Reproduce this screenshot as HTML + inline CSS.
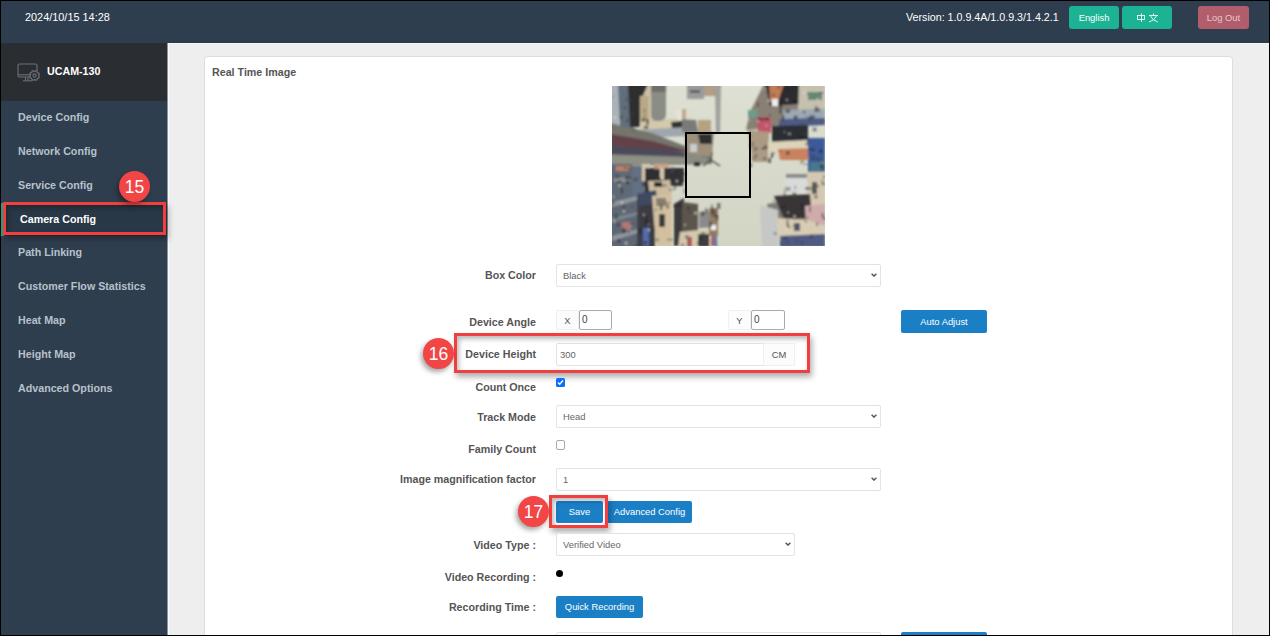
<!DOCTYPE html>
<html><head><meta charset="utf-8">
<style>
*{box-sizing:border-box;margin:0;padding:0}
html,body{width:1270px;height:636px;overflow:hidden;background:#eeeeee;font-family:"Liberation Sans",sans-serif}
.a{position:absolute}
#frame{position:absolute;left:0;top:0;width:1270px;height:636px;border:1px solid #000;z-index:100;pointer-events:none}
#hdr{left:0;top:0;width:1270px;height:43px;background:#2f3e4e}
.ht{color:#fff;font-size:10.7px;line-height:12px;white-space:nowrap}
.btn{border-radius:3px;color:#fff;font-size:9.4px;text-align:center;white-space:nowrap}
#side{left:0;top:43px;width:167px;height:593px;background:#2f3e4e}
#sidetop{left:0;top:43px;width:167px;height:58px;background:#2a2e33}
.nav{left:18px;color:#b8c1cb;font-size:10.7px;line-height:12px;font-weight:bold;white-space:nowrap}
#panel{left:204px;top:56px;width:1029px;height:600px;background:#fff;border:1px solid #dddddd;border-radius:4px}
.lbl{color:#555;font-size:10.7px;line-height:12px;font-weight:bold;white-space:nowrap;text-align:right;width:300px}
.sel{background:#fff;border:1px solid #e3e3e3;border-radius:2px}
.st{color:#666;font-size:9.4px;line-height:11px;white-space:nowrap}
.bb{background:#1b7fc6;border-radius:2px;color:#fff;font-size:9.4px;text-align:center;white-space:nowrap}
.badge{width:31px;height:31px;border-radius:50%;background:#f24545;color:#fff;font-size:17.5px;text-align:center;padding-top:1px;box-shadow:-2px 3px 5px rgba(0,0,0,0.35)}
.rbox{border:3px solid #f13e3e;box-shadow:2px 4px 6px rgba(0,0,0,0.32), inset 2px 3px 5px rgba(0,0,0,0.28)}
.arr{position:absolute;width:6px;height:4px}
.addon{background:#fcfcfc;border:1px solid #f0f0f0;color:#555;font-size:9.4px;text-align:center}
.inp{background:#fff;border:1px solid #aaaaaa;border-radius:2px;color:#444;font-size:10px}
</style></head><body>
<div id="hdr" class="a"></div>
<div class="a ht" style="left:25px;top:11px;font-size:10.9px">2024/10/15 14:28</div>
<div class="a ht" style="left:906px;top:11px">Version: 1.0.9.4A/1.0.9.3/1.4.2.1</div>
<div class="a btn" style="left:1069px;top:6px;width:50px;height:23px;background:#1bb394;line-height:23px">English</div>
<div class="a btn" style="left:1122px;top:6px;width:50px;height:23px;background:#1bb394"></div>
<svg class="a" style="left:1122px;top:6px" width="50" height="23" viewBox="0 0 50 23">
 <g stroke="#fff" stroke-width="0.85" fill="none">
  <rect x="15.5" y="9.5" width="7" height="4"/>
  <line x1="19.5" y1="7.5" x2="19.5" y2="16"/>
  <line x1="31.5" y1="7.5" x2="31.5" y2="9"/>
  <line x1="27" y1="9.5" x2="36" y2="9.5"/>
  <path d="M28.5 10 Q30.5 14.5 35.8 16"/>
  <path d="M34.5 10 Q32.5 14.5 27 16"/>
 </g>
</svg>
<div class="a btn" style="left:1198px;top:6px;width:51px;height:23px;background:#b15d6b;line-height:23px;color:#e6c9cd">Log Out</div>

<div id="side" class="a"></div>
<div id="sidetop" class="a"></div>
<div class="a" style="left:167px;top:43px;width:1px;height:593px;background:#8e9399"></div>
<div class="a" style="left:168px;top:43px;width:1px;height:593px;background:#fafafa"></div>
<div class="a" style="left:169px;top:41px;width:1101px;height:2px;background:#2c3b4b"></div>
<div class="a" style="left:169px;top:43px;width:1101px;height:1px;background:#f6f6f6"></div>
<svg class="a" style="left:16px;top:62px" width="26" height="22" viewBox="0 0 26 22">
 <g stroke="#6c7075" stroke-width="1.1" fill="none">
  <path d="M14 15 H3.5 Q2 15 2 13.5 V3.5 Q2 2 3.5 2 H19.5 Q21 2 21 3.5 V9"/>
  <line x1="2" y1="12.8" x2="15" y2="12.8"/>
  <path d="M9.5 15.5 V18.5 M12 15.5 V18.5"/>
  <line x1="7" y1="18.8" x2="16" y2="18.8"/>
  <path d="M22.58 13.94 L23.36 14.68 L22.77 16.10 L21.69 16.07 L21.07 16.69 L21.10 17.77 L19.68 18.36 L18.94 17.58 L18.06 17.58 L17.32 18.36 L15.90 17.77 L15.93 16.69 L15.31 16.07 L14.23 16.10 L13.64 14.68 L14.42 13.94 L14.42 13.06 L13.64 12.32 L14.23 10.90 L15.31 10.93 L15.93 10.31 L15.90 9.23 L17.32 8.64 L18.06 9.42 L18.94 9.42 L19.68 8.64 L21.10 9.23 L21.07 10.31 L21.69 10.93 L22.77 10.90 L23.36 12.32 L22.58 13.06Z"/>
  <circle cx="18.5" cy="13.5" r="1.6"/>
 </g>
</svg>
<div class="a ht" style="left:47px;top:65px;font-weight:bold">UCAM-130</div>
<div class="a nav" style="top:111px">Device Config</div>
<div class="a nav" style="top:145px">Network Config</div>
<div class="a nav" style="top:179px">Service Config</div>
<div class="a" style="left:1px;top:203px;width:166px;height:33px;background:#293846;border-left:3px solid #19aa8d"></div>
<div class="a nav" style="left:20px;top:213px;color:#fff">Camera Config</div>
<div class="a nav" style="top:246px">Path Linking</div>
<div class="a nav" style="top:280px">Customer Flow Statistics</div>
<div class="a nav" style="top:314px">Heat Map</div>
<div class="a nav" style="top:348px">Height Map</div>
<div class="a nav" style="top:382px">Advanced Options</div>

<div class="a rbox" style="left:3px;top:202px;width:163px;height:33px"></div>
<div class="a badge" style="left:119px;top:171px;line-height:31px">15</div>

<div id="panel" class="a"></div>
<div class="a lbl" style="left:212px;top:66px;text-align:left">Real Time Image</div>

<!-- camera image -->
<svg class="a" style="left:612px;top:86px" width="213" height="160" viewBox="0 0 213 160">
 <defs><filter id="bl" x="-5%" y="-5%" width="110%" height="110%"><feGaussianBlur stdDeviation="1"/><feColorMatrix type="saturate" values="0.72"/></filter>
 <clipPath id="cc"><rect width="213" height="160"/></clipPath></defs>
 <defs><linearGradient id="fl" x1="0" y1="0" x2="0" y2="1"><stop offset="0" stop-color="#dde0d2"/><stop offset="1" stop-color="#d2d5c4"/></linearGradient></defs><rect width="213" height="160" fill="url(#fl)"/>
 <g filter="url(#bl)" clip-path="url(#cc)">
 <!-- TL -->
 <rect x="-2" y="-2" width="9" height="42" fill="#a8b4bc"/>
 <polygon points="6,-2 20,-2 22,44 8,44" fill="#5c6e80"/>
 <polygon points="16,-2 36,-2 36,11 30,12 30,41 18,41" fill="#2e2e2e"/>
 <polygon points="28,12 44,12 46,33 66,33 66,44 28,44" fill="#d8c8a0"/>
 <polygon points="36,-2 40,-2 44,12 30,12" fill="#d0c098"/>
 <rect x="28" y="10" width="9" height="26" fill="#c0a878"/>
 <path d="M39,-2 H54 V28 Q54,35 47,35 H44 Q39,35 39,28 Z" fill="#8a8c84"/>
 <rect x="39" y="-2" width="15" height="8" fill="#6e7068"/>
 <rect x="64" y="24" width="8" height="9" fill="#e6e2d0"/>
 <polygon points="59,36 72,35 72,42 60,42" fill="#303030"/>
 <polygon points="24,44 75,41 76,50 26,52" fill="#9aa8b0"/>
 <!-- TC -->
 <rect x="75" y="-2" width="17" height="15" fill="#9a9c9a"/>
 <rect x="78" y="4" width="10" height="3" fill="#606060"/>
 <rect x="92" y="-2" width="13" height="12" fill="#b89c78"/>
 <path d="M103,-2 H109 L108,47 H104 Z" fill="#a0a09c"/>
 <rect x="70" y="23" width="6" height="10" fill="#c0a880"/>
 <rect x="74" y="23" width="7" height="10" fill="#e0dcc8"/>
 <polygon points="70,33 84,34 86,46 70,46" fill="#7a7a78"/>
 <rect x="86" y="34" width="13" height="12" fill="#bca070"/>
 <!-- pole wedge -->
 <polygon points="-2,37 40,47 73,60 100,71 100,78 -2,80" fill="#74766a"/>
 <polygon points="-2,48 40,55 80,66 -2,60" fill="#6a3e4a"/>
 <polygon points="-2,60 60,64 92,71 -2,68" fill="#4a4860"/>
 <polygon points="-2,69 90,72 100,77 -2,79" fill="#8e9082"/>
 <!-- under pole -->
 <rect x="-2" y="78" width="22" height="34" fill="#5a6a7c"/>
 <rect x="4" y="80" width="14" height="5" fill="#c87a50"/>
 <rect x="2" y="92" width="16" height="4" fill="#8a929a"/>
 <rect x="20" y="80" width="13" height="30" fill="#5e7088"/>
 <rect x="30" y="78" width="8" height="17" fill="#d8c8a0"/>
 <rect x="33" y="82" width="16" height="28" fill="#2e2e36"/>
 <rect x="42" y="78" width="15" height="5" fill="#d8a078"/>
 <rect x="48" y="82" width="4" height="10" fill="#d8c8a0"/>
 <rect x="52" y="82" width="20" height="18" fill="#333338"/>
 <polygon points="36,95 58,94 60,110 38,110" fill="#d0bc90"/>
 <rect x="42" y="96" width="8" height="5" fill="#2a2a2c"/>
 <!-- BL -->
 <rect x="-2" y="110" width="29" height="52" fill="#5a6878"/>
 <polygon points="0,116 26,110 26,114 0,121" fill="#8e96a0"/>
 <rect x="10" y="136" width="9" height="8" fill="#c07070"/>
 <polygon points="0,150 26,143 26,147 0,155" fill="#8e96a0"/>
 <polygon points="0,132 26,126 26,129 0,136" fill="#7a8490"/>
 <rect x="25" y="108" width="18" height="54" fill="#3c4049"/>
 <polygon points="25,108 44,104 46,122 28,126" fill="#3a4a68"/>
 <polygon points="28,120 40,118 42,160 30,160" fill="#3a3a42"/>
 <rect x="31" y="142" width="6" height="18" fill="#4a6ac0"/>
 <polygon points="40,110 60,108 60,160 44,160" fill="#d8c090"/>
 <rect x="47" y="128" width="6" height="13" fill="#3a3a3a"/>
 <rect x="44" y="112" width="10" height="8" fill="#8a7e6a"/>
 <polygon points="62,118 72,112 72,160 62,160" fill="#3a3a3e"/>
 <!-- BC -->
 <polygon points="70,116 86,118 86,150 70,148" fill="#5e5448"/>
 <rect x="87" y="126" width="10" height="16" fill="#8a8a8a"/>
 <rect x="97" y="122" width="9" height="28" fill="#9a7a5c"/>
 <rect x="99" y="139" width="5" height="5" fill="#f4f4f0"/>
 <polygon points="68,146 97,143 97,162 66,162" fill="#d8c8a0"/>
 <rect x="75" y="151" width="5" height="10" fill="#c04848"/>
 <rect x="86" y="148" width="11" height="13" fill="#3c3c3c"/>
 <rect x="99" y="150" width="3" height="10" fill="#c05050"/>
 <rect x="102" y="150" width="3" height="10" fill="#4a80b0"/>
 
 <!-- inside box -->
 <polygon points="73,46 102,46 100,70 74,70" fill="#a09070"/>
 <polygon points="86,48 100,48 100,58 88,58" fill="#2e2e2e"/>
 <rect x="78" y="58" width="7" height="8" fill="#c8ccd0"/>
 <polygon points="73,66 96,72 96,78 73,76" fill="#8a8c80"/>
 <rect x="82" y="76" width="6" height="4" fill="#2a2a2a"/>
 <g stroke="#3a3a38" stroke-width="1.1"><line x1="99" y1="74" x2="91" y2="80"/><line x1="99" y1="74" x2="108" y2="80"/><line x1="99" y1="74" x2="100" y2="66"/></g>
 <!-- TR -->
 <polygon points="152,-2 213,-2 213,24 158,42 134,44 138,26" fill="#8a8070"/>
 <polygon points="153,-2 190,-2 188,18 158,20" fill="#2a2a30"/>
 <polygon points="157,-2 172,-2 166,16 158,16" fill="#d07432"/>
 <rect x="160" y="13" width="6" height="7" fill="#f0f0f0"/>
 <polygon points="187,-2 213,-2 213,24 186,24" fill="#c8c0a8"/>
 <rect x="196" y="6" width="14" height="8" fill="#5a8a70"/>
 <rect x="136" y="24" width="9" height="7" fill="#55a08e"/>
 <polygon points="171,24 213,23 213,33 172,34" fill="#98a8b8"/>
 <polygon points="168,33 213,32 213,39 166,41" fill="#4a5a90"/>
 <polygon points="145,31 159,31 159,47 146,47" fill="#d84060"/>
 <polygon points="136,44 157,46 156,76 140,76" fill="#b09a78"/>
 <polygon points="160,40 196,39 196,57 160,58" fill="#2a2e34"/>
 <polygon points="156,56 195,54 195,68 156,68" fill="#e0d4b0"/>
 <polygon points="166,63 202,62 200,74 168,74" fill="#d87a38"/>
 <rect x="196" y="52" width="17" height="34" fill="#2a5aa8"/>
 <rect x="198" y="76" width="15" height="10" fill="#2a7a9a"/>
 <!-- BR -->
 <rect x="194" y="86" width="19" height="36" fill="#d8c8a8"/>
 <rect x="200" y="96" width="5" height="12" fill="#5a5a5a"/>
 <polygon points="174,90 195,90 195,107 174,107" fill="#d8dcd8"/>
 <rect x="174" y="88" width="21" height="4" fill="#8a8c88"/>
 <polygon points="155,118 196,112 200,135 157,135" fill="#7a7c70"/>
 <polygon points="162,110 198,108 200,132 172,133" fill="#3a3438"/>
 <polygon points="148,119 166,124 166,161 150,161" fill="#c4c8c6"/>
 <polygon points="193,120 213,118 213,142 194,140" fill="#d8a8a8"/>
 <polygon points="165,132 196,134 213,140 213,152 166,155" fill="#dccca8"/>
 <rect x="182" y="137" width="6" height="8" fill="#505870"/>
 <polygon points="168,150 213,148 213,161 168,161" fill="#4a5a90"/>
 <!-- texture -->
 <rect x="12.4" y="81.2" width="2.3" height="1.7" fill="#202226" opacity="0.54"/>
 <rect x="12.6" y="90.5" width="5.8" height="2.9" fill="#202226" opacity="0.55"/>
 <rect x="84.5" y="156.2" width="3.6" height="1.7" fill="#2a2c30" opacity="0.54"/>
 <rect x="145.3" y="16.5" width="1.6" height="4.1" fill="#202226" opacity="0.55"/>
 <rect x="99.2" y="147.8" width="1.7" height="3.1" fill="#2a2c30" opacity="0.38"/>
 <rect x="72.9" y="149.3" width="3.9" height="3.4" fill="#4a4a50" opacity="0.55"/>
 <rect x="186.5" y="50.2" width="4.6" height="2.8" fill="#1c1e22" opacity="0.37"/>
 <rect x="19.9" y="43.2" width="4.6" height="1.2" fill="#3a3a3e" opacity="0.58"/>
 <rect x="211.5" y="131.5" width="2.8" height="2.2" fill="#202226" opacity="0.68"/>
 <rect x="61.2" y="118.1" width="3.8" height="3.3" fill="#2a2c30" opacity="0.51"/>
 <rect x="174.5" y="138.2" width="2.2" height="2.8" fill="#1c1e22" opacity="0.69"/>
 <rect x="32.1" y="28.2" width="1.7" height="2.5" fill="#4a4a50" opacity="0.41"/>
 <rect x="183.0" y="152.0" width="3.2" height="4.4" fill="#4a4a50" opacity="0.49"/>
 <rect x="14.3" y="33.4" width="2.0" height="2.2" fill="#202226" opacity="0.55"/>
 <rect x="208.3" y="76.9" width="2.9" height="1.4" fill="#3a3a3e" opacity="0.52"/>
 <rect x="43.7" y="152.3" width="3.1" height="3.1" fill="#4a4a50" opacity="0.45"/>
 <rect x="193.5" y="56.9" width="2.5" height="2.6" fill="#2a2c30" opacity="0.56"/>
 <rect x="167.9" y="121.3" width="1.7" height="2.4" fill="#2a2c30" opacity="0.42"/>
 <rect x="105.0" y="117.0" width="3.4" height="6.0" fill="#2a2c30" opacity="0.59"/>
 <rect x="203.7" y="71.6" width="5.7" height="4.0" fill="#3a3a3e" opacity="0.38"/>
 <rect x="209.9" y="97.6" width="3.7" height="1.5" fill="#202226" opacity="0.64"/>
 <rect x="151.5" y="31.9" width="5.5" height="2.3" fill="#202226" opacity="0.63"/>
 <rect x="207.0" y="63.3" width="3.3" height="3.8" fill="#2a2c30" opacity="0.70"/>
 <rect x="5.9" y="94.5" width="3.6" height="3.0" fill="#4a4a50" opacity="0.69"/>
 <rect x="140.0" y="56.1" width="1.4" height="4.0" fill="#202226" opacity="0.53"/>
 <rect x="198.9" y="69.4" width="3.5" height="5.4" fill="#3a3a3e" opacity="0.42"/>
 <rect x="69.4" y="87.1" width="5.3" height="1.2" fill="#1c1e22" opacity="0.58"/>
 <rect x="176.2" y="140.5" width="2.1" height="1.5" fill="#1c1e22" opacity="0.62"/>
 <rect x="31.9" y="22.6" width="1.4" height="4.3" fill="#4a4a50" opacity="0.54"/>
 <rect x="102.8" y="124.2" width="1.2" height="5.5" fill="#202226" opacity="0.62"/>
 <rect x="161.9" y="146.0" width="3.5" height="2.8" fill="#4a4a50" opacity="0.42"/>
 <rect x="59.0" y="81.3" width="2.5" height="5.1" fill="#4a4a50" opacity="0.66"/>
 <rect x="200.7" y="41.5" width="4.0" height="3.8" fill="#2a2c30" opacity="0.50"/>
 <rect x="143.0" y="68.5" width="1.9" height="2.5" fill="#2a2c30" opacity="0.68"/>
 <rect x="137.1" y="58.6" width="1.4" height="2.6" fill="#202226" opacity="0.49"/>
 <rect x="103.8" y="158.4" width="1.5" height="5.2" fill="#4a4a50" opacity="0.49"/>
 <rect x="149.8" y="61.5" width="3.8" height="1.9" fill="#202226" opacity="0.69"/>
 <rect x="167.9" y="155.5" width="1.8" height="2.0" fill="#2a2c30" opacity="0.44"/>
 <rect x="194.1" y="131.0" width="2.7" height="1.4" fill="#4a4a50" opacity="0.52"/>
 <rect x="170.3" y="29.3" width="1.8" height="5.5" fill="#202226" opacity="0.63"/>
 <rect x="17.8" y="137.0" width="3.6" height="1.8" fill="#3a3a3e" opacity="0.70"/>
 <rect x="89.0" y="146.5" width="4.3" height="1.1" fill="#202226" opacity="0.69"/>
 <rect x="198.6" y="100.6" width="1.6" height="3.9" fill="#2a2c30" opacity="0.44"/>
 <rect x="171.2" y="159.1" width="1.7" height="1.1" fill="#2a2c30" opacity="0.53"/>
 <rect x="189.3" y="155.2" width="1.6" height="2.9" fill="#2a2c30" opacity="0.64"/>
 <rect x="11.6" y="20.8" width="3.2" height="1.8" fill="#2a2c30" opacity="0.37"/>
 <rect x="141.7" y="60.9" width="3.8" height="3.9" fill="#3a3a3e" opacity="0.37"/>
 <rect x="70.1" y="157.6" width="3.0" height="1.1" fill="#2a2c30" opacity="0.47"/>
 <rect x="42.8" y="80.8" width="1.8" height="1.5" fill="#1c1e22" opacity="0.56"/>
 <rect x="204.0" y="136.5" width="2.2" height="3.7" fill="#4a4a50" opacity="0.49"/>
 <rect x="69.5" y="157.6" width="2.2" height="3.2" fill="#202226" opacity="0.64"/>
 <rect x="173.1" y="2.6" width="4.6" height="3.4" fill="#2a2c30" opacity="0.38"/>
 <rect x="8.9" y="101.9" width="2.1" height="5.8" fill="#202226" opacity="0.57"/>
 <rect x="169.9" y="119.7" width="3.8" height="2.6" fill="#202226" opacity="0.61"/>
 <rect x="100.9" y="129.5" width="5.3" height="1.7" fill="#2a2c30" opacity="0.61"/>
 <rect x="207.8" y="79.0" width="3.2" height="2.4" fill="#202226" opacity="0.57"/>
 <rect x="31.4" y="40.6" width="4.8" height="1.9" fill="#202226" opacity="0.52"/>
 <rect x="103.5" y="155.6" width="1.7" height="1.9" fill="#4a4a50" opacity="0.45"/>
 <rect x="99.2" y="122.7" width="2.6" height="6.0" fill="#202226" opacity="0.68"/>
 <rect x="174.6" y="154.9" width="1.8" height="3.5" fill="#2a2c30" opacity="0.38"/>
 <rect x="19.2" y="119.6" width="2.7" height="2.1" fill="#4a4a50" opacity="0.45"/>
 <rect x="202.3" y="109.1" width="3.2" height="3.3" fill="#1c1e22" opacity="0.46"/>
 <rect x="179.0" y="0.3" width="3.5" height="4.9" fill="#2a2c30" opacity="0.60"/>
 <rect x="192.0" y="46.4" width="3.2" height="2.2" fill="#4a4a50" opacity="0.38"/>
 <rect x="197.1" y="120.9" width="1.8" height="5.3" fill="#3a3a3e" opacity="0.57"/>
 <rect x="31.7" y="155.4" width="3.5" height="1.9" fill="#1c1e22" opacity="0.66"/>
 <rect x="172.9" y="100.9" width="5.6" height="3.8" fill="#202226" opacity="0.37"/>
 <rect x="156.0" y="72.1" width="2.9" height="4.9" fill="#202226" opacity="0.67"/>
 <rect x="54.5" y="118.2" width="2.2" height="4.4" fill="#1c1e22" opacity="0.55"/>
 <rect x="34.4" y="33.3" width="2.5" height="5.6" fill="#3a3a3e" opacity="0.70"/>
 <rect x="159.7" y="66.0" width="2.6" height="3.4" fill="#3a3a3e" opacity="0.61"/>
 <rect x="180.8" y="14.8" width="5.5" height="2.2" fill="#1c1e22" opacity="0.68"/>
 <rect x="180.8" y="139.7" width="1.6" height="1.1" fill="#1c1e22" opacity="0.69"/>
 <rect x="198.1" y="148.5" width="2.4" height="3.9" fill="#202226" opacity="0.43"/>
 <rect x="32.4" y="155.5" width="2.0" height="3.5" fill="#1c1e22" opacity="0.38"/>
 <rect x="165.5" y="0.2" width="2.7" height="2.1" fill="#3a3a3e" opacity="0.69"/>
 <rect x="93.2" y="122.2" width="1.9" height="1.9" fill="#2a2c30" opacity="0.49"/>
 <rect x="47.6" y="96.2" width="1.9" height="1.5" fill="#3a3a3e" opacity="0.58"/>
 <rect x="188.2" y="76.0" width="2.6" height="1.7" fill="#3a3a3e" opacity="0.37"/>
 <rect x="41.3" y="141.6" width="1.2" height="4.4" fill="#1c1e22" opacity="0.67"/>
 <rect x="145.4" y="31.7" width="5.1" height="3.2" fill="#2a2c30" opacity="0.52"/>
 <rect x="42.7" y="122.5" width="2.4" height="2.4" fill="#3a3a3e" opacity="0.39"/>
 <rect x="190.9" y="77.6" width="5.6" height="1.2" fill="#1c1e22" opacity="0.37"/>
 <rect x="5.0" y="95.4" width="3.1" height="3.4" fill="#1c1e22" opacity="0.66"/>
 <rect x="188.2" y="117.2" width="3.8" height="6.0" fill="#2a2c30" opacity="0.58"/>
 <rect x="66.4" y="116.1" width="4.0" height="5.3" fill="#202226" opacity="0.35"/>
 <rect x="203.5" y="19.8" width="1.6" height="5.8" fill="#3a3a3e" opacity="0.64"/>
 <rect x="195.9" y="30.9" width="3.7" height="3.1" fill="#1c1e22" opacity="0.44"/>
 <rect x="171.1" y="9.9" width="2.4" height="1.2" fill="#3a3a3e" opacity="0.45"/>
 <rect x="204.0" y="98.7" width="3.1" height="2.7" fill="#3a3a3e" opacity="0.45"/>
 <rect x="171.6" y="151.4" width="3.5" height="1.8" fill="#1c1e22" opacity="0.68"/>
 <rect x="197.7" y="29.3" width="5.1" height="3.2" fill="#2a2c30" opacity="0.56"/>
 <rect x="77.1" y="125.2" width="1.9" height="1.6" fill="#2a2c30" opacity="0.49"/>
 <rect x="138.4" y="77.1" width="1.5" height="4.0" fill="#202226" opacity="0.70"/>
 <rect x="151.2" y="71.5" width="2.6" height="2.3" fill="#2a2c30" opacity="0.61"/>
 <rect x="180.4" y="106.3" width="3.5" height="2.0" fill="#4a4a50" opacity="0.44"/>
 <rect x="193.3" y="30.1" width="1.8" height="1.8" fill="#4a4a50" opacity="0.43"/>
 <rect x="172.2" y="104.5" width="1.3" height="6.0" fill="#2a2c30" opacity="0.64"/>
 <rect x="194.8" y="6.5" width="1.4" height="2.8" fill="#4a4a50" opacity="0.42"/>
 <rect x="16.0" y="82.0" width="2.3" height="2.8" fill="#202226" opacity="0.39"/>
 <rect x="30.1" y="32.6" width="2.6" height="2.8" fill="#2a2c30" opacity="0.64"/>
 <rect x="174.4" y="65.4" width="2.9" height="3.2" fill="#202226" opacity="0.63"/>
 <rect x="19.4" y="26.2" width="2.2" height="4.6" fill="#3a3a3e" opacity="0.50"/>
 <rect x="10.9" y="119.3" width="2.2" height="5.5" fill="#3a3a3e" opacity="0.58"/>
 <rect x="200.6" y="69.5" width="1.3" height="2.2" fill="#4a4a50" opacity="0.66"/>
 <rect x="3.2" y="88.2" width="3.7" height="4.4" fill="#4a4a50" opacity="0.67"/>
 <rect x="157.0" y="27.5" width="1.5" height="3.1" fill="#202226" opacity="0.39"/>
 <rect x="104.5" y="128.8" width="1.6" height="5.9" fill="#202226" opacity="0.69"/>
 <rect x="197.3" y="62.1" width="5.6" height="2.9" fill="#2a2c30" opacity="0.57"/>
 <rect x="182.5" y="99.4" width="1.6" height="4.3" fill="#4a4a50" opacity="0.43"/>
 <rect x="52.6" y="116.0" width="5.5" height="1.1" fill="#202226" opacity="0.58"/>
 <rect x="97.1" y="135.8" width="2.9" height="5.0" fill="#2a2c30" opacity="0.50"/>
 <rect x="140.3" y="71.5" width="3.5" height="1.1" fill="#1c1e22" opacity="0.51"/>
 <rect x="174.4" y="133.8" width="2.2" height="5.1" fill="#3a3a3e" opacity="0.50"/>
 <rect x="202.5" y="21.8" width="5.4" height="4.0" fill="#202226" opacity="0.42"/>
 <rect x="209.1" y="78.7" width="3.7" height="5.8" fill="#2a2c30" opacity="0.37"/>
 <rect x="74.7" y="121.0" width="3.7" height="2.2" fill="#1c1e22" opacity="0.40"/>
 <rect x="7.8" y="29.1" width="2.2" height="3.8" fill="#1c1e22" opacity="0.41"/>
 <rect x="167.2" y="18.4" width="2.9" height="3.9" fill="#1c1e22" opacity="0.54"/>
 <rect x="22.3" y="158.9" width="4.3" height="2.2" fill="#3a3a3e" opacity="0.48"/>
 <rect x="49.0" y="98.5" width="5.8" height="1.9" fill="#3a3a3e" opacity="0.57"/>
 <rect x="209.6" y="93.7" width="1.9" height="4.5" fill="#202226" opacity="0.43"/>
 <rect x="62.0" y="100.1" width="2.1" height="3.4" fill="#1c1e22" opacity="0.43"/>
 <rect x="47.8" y="93.4" width="4.2" height="1.6" fill="#1c1e22" opacity="0.41"/>
 <rect x="3.0" y="128.2" width="2.4" height="4.7" fill="#2a2c30" opacity="0.65"/>
 <rect x="166.6" y="64.3" width="2.7" height="1.0" fill="#4a4a50" opacity="0.66"/>
 <rect x="0.1" y="9.8" width="1.6" height="1.6" fill="#202226" opacity="0.35"/>
 <rect x="30.3" y="31.9" width="4.2" height="2.5" fill="#4a4a50" opacity="0.41"/>
 <rect x="10.3" y="142.3" width="3.1" height="5.0" fill="#1c1e22" opacity="0.61"/>
 <rect x="99.1" y="118.7" width="1.7" height="3.5" fill="#2a2c30" opacity="0.58"/>
 <rect x="26.3" y="142.6" width="3.8" height="5.7" fill="#202226" opacity="0.44"/>
 <rect x="56.5" y="102.7" width="5.8" height="1.7" fill="#202226" opacity="0.41"/>
 <rect x="192.7" y="134.7" width="2.4" height="1.5" fill="#2a2c30" opacity="0.66"/>
 <rect x="193.3" y="100.9" width="4.6" height="3.0" fill="#1c1e22" opacity="0.52"/>
 <rect x="5.6" y="152.9" width="2.6" height="3.7" fill="#1c1e22" opacity="0.57"/>
 <rect x="16.6" y="145.7" width="1.1" height="2.2" fill="#2a2c30" opacity="0.47"/>
 <rect x="30.2" y="4.6" width="1.7" height="3.1" fill="#202226" opacity="0.61"/>
 <rect x="14.0" y="94.5" width="3.1" height="3.5" fill="#202226" opacity="0.66"/>
 <rect x="161.0" y="113.8" width="1.7" height="3.2" fill="#202226" opacity="0.36"/>
 <rect x="180.6" y="129.9" width="4.4" height="3.5" fill="#3a3a3e" opacity="0.52"/>
 <rect x="28.3" y="126.7" width="1.9" height="4.4" fill="#3a3a3e" opacity="0.36"/>
 <rect x="152.5" y="58.9" width="2.9" height="3.9" fill="#3a3a3e" opacity="0.57"/>
 <rect x="93.0" y="123.7" width="3.1" height="3.1" fill="#2a2c30" opacity="0.60"/>
 <rect x="159.9" y="8.6" width="3.1" height="1.3" fill="#2a2c30" opacity="0.69"/>
 <rect x="33.8" y="130.4" width="1.7" height="5.7" fill="#202226" opacity="0.52"/>
 <rect x="211.1" y="89.8" width="2.0" height="2.0" fill="#1c1e22" opacity="0.66"/>
 <rect x="158.7" y="67.5" width="2.1" height="4.4" fill="#1c1e22" opacity="0.67"/>
 <rect x="188.3" y="37.4" width="3.6" height="2.6" fill="#4a4a50" opacity="0.58"/>
 <rect x="33.1" y="134.9" width="3.2" height="4.5" fill="#1c1e22" opacity="0.59"/>
 <rect x="71.2" y="102.8" width="2.5" height="4.6" fill="#4a4a50" opacity="0.40"/>
 <rect x="33.2" y="39.6" width="2.6" height="3.0" fill="#3a3a3e" opacity="0.68"/>
 <rect x="55.1" y="152.8" width="6.0" height="1.5" fill="#2a2c30" opacity="0.48"/>
 <rect x="209.6" y="127.2" width="2.3" height="4.8" fill="#202226" opacity="0.45"/>
 <rect x="188.6" y="74.2" width="3.6" height="1.6" fill="#2a2c30" opacity="0.53"/>
 <rect x="30.2" y="96.6" width="3.3" height="3.2" fill="#1c1e22" opacity="0.60"/>
 <rect x="180.2" y="106.9" width="4.4" height="3.6" fill="#4a4a50" opacity="0.65"/>
 <rect x="89.4" y="125.2" width="2.9" height="4.7" fill="#1c1e22" opacity="0.52"/>
 <rect x="4.2" y="137.4" width="3.8" height="3.0" fill="#3a3a3e" opacity="0.62"/>
 <rect x="207.6" y="6.1" width="3.9" height="1.5" fill="#2a2c30" opacity="0.53"/>
 <rect x="21.5" y="91.9" width="3.9" height="3.2" fill="#3a3a3e" opacity="0.53"/>
 <rect x="87.4" y="151.7" width="3.1" height="2.4" fill="#202226" opacity="0.61"/>
 <rect x="13.1" y="12.0" width="5.6" height="2.9" fill="#4a4a50" opacity="0.44"/>
 <rect x="47.8" y="118.6" width="2.6" height="5.7" fill="#1c1e22" opacity="0.51"/>
 <rect x="35.0" y="148.7" width="3.4" height="1.8" fill="#4a4a50" opacity="0.60"/>
 <rect x="173.5" y="23.4" width="4.5" height="3.5" fill="#1c1e22" opacity="0.51"/>
 <rect x="62.7" y="87.7" width="3.5" height="2.1" fill="#2a2c30" opacity="0.44"/>
 <rect x="0.6" y="115.5" width="1.7" height="2.8" fill="#1c1e22" opacity="0.52"/>
 <rect x="191.1" y="24.4" width="2.2" height="2.9" fill="#4a4a50" opacity="0.67"/>
 <rect x="167.0" y="22.5" width="2.9" height="5.2" fill="#202226" opacity="0.42"/>
 <rect x="181.9" y="29.7" width="3.4" height="3.5" fill="#1c1e22" opacity="0.63"/>
 <rect x="35.8" y="142.6" width="2.2" height="2.6" fill="#e8e4d8" opacity="0.6"/>
 <rect x="167.9" y="134.2" width="1.4" height="2.4" fill="#e8e4d8" opacity="0.6"/>
 <rect x="93.4" y="141.2" width="2.1" height="1.5" fill="#e8e4d8" opacity="0.6"/>
 <rect x="1.4" y="134.5" width="1.9" height="2.1" fill="#e8e4d8" opacity="0.6"/>
 <rect x="204.6" y="12.1" width="2.3" height="2.3" fill="#e8e4d8" opacity="0.6"/>
 <rect x="6.1" y="97.5" width="2.4" height="2.9" fill="#e8e4d8" opacity="0.6"/>
 <rect x="70.4" y="157.1" width="2.0" height="2.0" fill="#e8e4d8" opacity="0.6"/>
 <rect x="191.2" y="5.4" width="2.4" height="2.3" fill="#e8e4d8" opacity="0.6"/>
 <rect x="72.1" y="137.9" width="1.7" height="1.9" fill="#e8e4d8" opacity="0.6"/>
 <rect x="176.1" y="46.9" width="2.7" height="1.8" fill="#e8e4d8" opacity="0.6"/>
 <rect x="63.7" y="93.8" width="2.3" height="2.6" fill="#e8e4d8" opacity="0.6"/>
 <rect x="8.5" y="115.6" width="2.8" height="2.1" fill="#e8e4d8" opacity="0.6"/>
 <rect x="1.3" y="30.4" width="2.8" height="2.2" fill="#e8e4d8" opacity="0.6"/>
 <rect x="193.8" y="97.9" width="2.2" height="2.3" fill="#e8e4d8" opacity="0.6"/>
 <rect x="145.0" y="34.0" width="2.3" height="1.9" fill="#e8e4d8" opacity="0.6"/>
 <rect x="162.4" y="16.2" width="1.4" height="1.1" fill="#e8e4d8" opacity="0.6"/>
 <rect x="165.0" y="146.3" width="2.3" height="1.7" fill="#e8e4d8" opacity="0.6"/>
 <rect x="175.2" y="125.8" width="2.1" height="1.5" fill="#e8e4d8" opacity="0.6"/>
 <rect x="11.6" y="90.8" width="1.1" height="1.2" fill="#e8e4d8" opacity="0.6"/>
 <rect x="195.7" y="71.4" width="1.0" height="1.8" fill="#e8e4d8" opacity="0.6"/>
 <rect x="208.9" y="76.1" width="1.8" height="1.2" fill="#e8e4d8" opacity="0.6"/>
 <rect x="137.3" y="34.0" width="1.3" height="1.0" fill="#e8e4d8" opacity="0.6"/>
 <rect x="1.0" y="109.4" width="1.2" height="2.9" fill="#e8e4d8" opacity="0.6"/>
 <rect x="18.8" y="139.1" width="1.3" height="1.0" fill="#e8e4d8" opacity="0.6"/>
 <rect x="153.2" y="38.8" width="2.5" height="1.4" fill="#e8e4d8" opacity="0.6"/>
 <rect x="10.7" y="123.8" width="2.4" height="2.7" fill="#e8e4d8" opacity="0.6"/>
 <rect x="155.4" y="13.5" width="2.3" height="2.4" fill="#e8e4d8" opacity="0.6"/>
 <rect x="98.1" y="149.2" width="1.5" height="2.9" fill="#e8e4d8" opacity="0.6"/>
 <rect x="152.8" y="1.8" width="1.0" height="2.3" fill="#e8e4d8" opacity="0.6"/>
 <rect x="174.1" y="12.7" width="1.6" height="2.5" fill="#e8e4d8" opacity="0.6"/>
 <rect x="35.4" y="137.8" width="2.0" height="1.1" fill="#e8e4d8" opacity="0.6"/>
 <rect x="30.9" y="127.6" width="1.7" height="2.3" fill="#e8e4d8" opacity="0.6"/>
 <rect x="82.2" y="125.8" width="2.9" height="2.6" fill="#e8e4d8" opacity="0.6"/>
 <rect x="12.9" y="155.8" width="2.4" height="2.7" fill="#e8e4d8" opacity="0.6"/>
 <rect x="70.7" y="96.9" width="3.0" height="2.7" fill="#e8e4d8" opacity="0.6"/>
 <rect x="91.3" y="142.1" width="1.8" height="2.4" fill="#e8e4d8" opacity="0.6"/>
 <rect x="172.0" y="45.3" width="1.0" height="1.5" fill="#e8e4d8" opacity="0.6"/>
 <rect x="173.8" y="142.0" width="1.1" height="2.7" fill="#e8e4d8" opacity="0.6"/>
 <rect x="172.9" y="138.8" width="2.1" height="1.5" fill="#e8e4d8" opacity="0.6"/>
 <rect x="181.3" y="129.1" width="2.4" height="2.8" fill="#e8e4d8" opacity="0.6"/>
 <!-- /texture -->
 </g>
</svg>


<div class="a" style="left:685px;top:132px;width:66px;height:66px;border:2px solid #000"></div>

<div class="a lbl" style="left:236px;top:269px">Box Color</div>
<div class="a sel" style="left:556px;top:264px;width:325px;height:23px"></div>
<div class="a st" style="left:563px;top:270px">Black</div>
<svg class="arr" style="left:871px;top:273px" viewBox="0 0 6 4"><path d="M0.6 0.7 L3 3.1 L5.4 0.7" stroke="#555" stroke-width="1.4" fill="none"/></svg>

<div class="a lbl" style="left:236px;top:316px">Device Angle</div>
<div class="a addon" style="left:556px;top:310px;width:23px;height:20px;line-height:20px">X</div>
<div class="a inp" style="left:579px;top:310px;width:33px;height:20px;line-height:18px;padding-left:2px">0</div>
<div class="a addon" style="left:728px;top:310px;width:23px;height:20px;line-height:20px">Y</div>
<div class="a inp" style="left:751px;top:310px;width:34px;height:20px;line-height:18px;padding-left:2px">0</div>
<div class="a bb" style="left:901px;top:310px;width:86px;height:23px;line-height:23px">Auto Adjust</div>

<div class="a lbl" style="left:236px;top:348px">Device Height</div>
<div class="a sel" style="left:556px;top:343px;width:208px;height:23px"></div>
<div class="a st" style="left:560px;top:349px">300</div>
<div class="a addon" style="left:763px;top:343px;width:32px;height:23px;line-height:21px">CM</div>
<div class="a rbox" style="left:454px;top:333px;width:356px;height:40px"></div>
<div class="a badge" style="left:423px;top:338px;line-height:31px">16</div>

<div class="a lbl" style="left:236px;top:381px">Count Once</div>
<svg class="a" style="left:556px;top:378px" width="9" height="9" viewBox="0 0 9 9"><rect width="9" height="9" rx="1.5" fill="#0d6efd"/><path d="M2 4.6 L3.7 6.3 L7 2.5" stroke="#fff" stroke-width="1.4" fill="none"/></svg>

<div class="a lbl" style="left:236px;top:411px">Track Mode</div>
<div class="a sel" style="left:556px;top:405px;width:325px;height:23px"></div>
<div class="a st" style="left:563px;top:411px">Head</div>
<svg class="arr" style="left:871px;top:414px" viewBox="0 0 6 4"><path d="M0.6 0.7 L3 3.1 L5.4 0.7" stroke="#555" stroke-width="1.4" fill="none"/></svg>

<div class="a lbl" style="left:236px;top:443px">Family Count</div>
<div class="a" style="left:556px;top:440px;width:9px;height:10px;border:1px solid #a8a8a8;border-radius:2px;background:#fff"></div>

<div class="a lbl" style="left:236px;top:473px">Image magnification factor</div>
<div class="a sel" style="left:556px;top:468px;width:325px;height:23px"></div>
<div class="a st" style="left:563px;top:474px">1</div>
<svg class="arr" style="left:871px;top:477px" viewBox="0 0 6 4"><path d="M0.6 0.7 L3 3.1 L5.4 0.7" stroke="#555" stroke-width="1.4" fill="none"/></svg>

<div class="a bb" style="left:556px;top:501px;width:47px;height:22px;line-height:22px">Save</div>
<div class="a bb" style="left:607px;top:501px;width:85px;height:22px;line-height:22px">Advanced Config</div>
<div class="a rbox" style="left:549px;top:495px;width:59px;height:33px"></div>
<div class="a badge" style="left:518px;top:496px;line-height:31px">17</div>

<div class="a lbl" style="left:236px;top:539px">Video Type :</div>
<div class="a sel" style="left:556px;top:533px;width:239px;height:23px"></div>
<div class="a st" style="left:563px;top:539px">Verified Video</div>
<svg class="arr" style="left:785px;top:542px" viewBox="0 0 6 4"><path d="M0.6 0.7 L3 3.1 L5.4 0.7" stroke="#555" stroke-width="1.4" fill="none"/></svg>

<div class="a lbl" style="left:236px;top:571px">Video Recording :</div>
<div class="a" style="left:556px;top:570px;width:7px;height:7px;border-radius:50%;background:#000"></div>
<div class="a lbl" style="left:236px;top:601px">Recording Time :</div>
<div class="a bb" style="left:556px;top:596px;width:87px;height:22px;line-height:22px">Quick Recording</div>
<div class="a sel" style="left:556px;top:632px;width:325px;height:23px"></div>
<div class="a bb" style="left:901px;top:632px;width:86px;height:23px"></div>

<div id="frame"></div>
</body></html>
